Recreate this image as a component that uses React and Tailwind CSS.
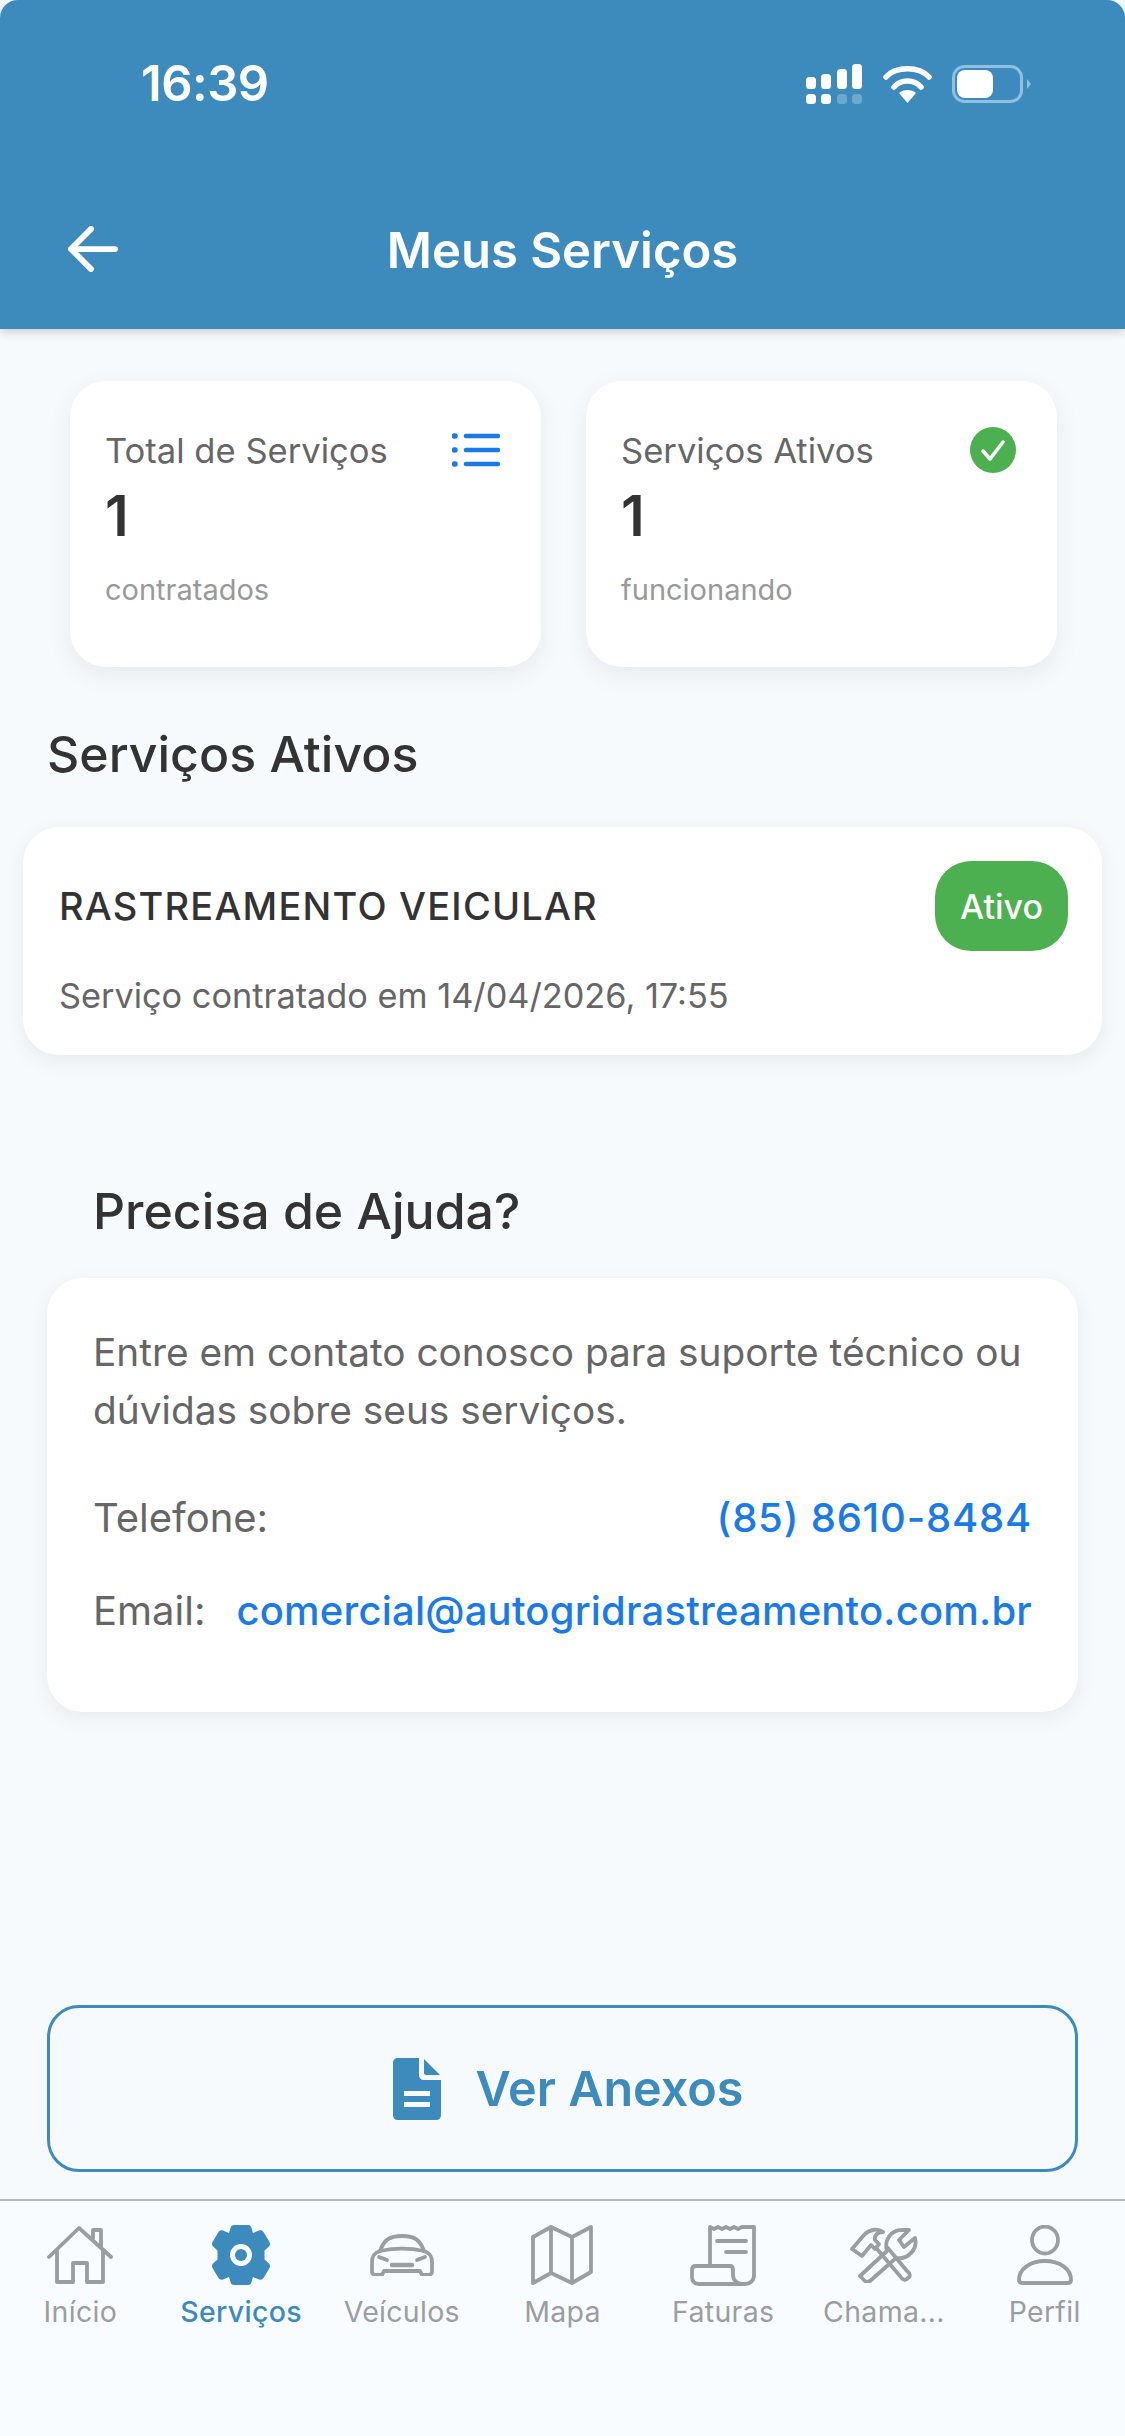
import React from 'react';

const BLUE = '#3d8bbd';

const StatusIcons = () => (
  <svg width="226" height="40" viewBox="0 0 226 40" fill="none">
    {/* signal */}
    <g fill="#fff">
      <rect x="0" y="13" width="10" height="12" rx="3.5" />
      <rect x="15" y="10" width="10" height="15" rx="3.5" />
      <rect x="31" y="5" width="10" height="20" rx="3.5" />
      <rect x="46" y="0" width="10" height="25" rx="3.5" />
      <rect x="0" y="30" width="10" height="10" rx="3.5" />
      <rect x="15" y="30" width="10" height="10" rx="3.5" />
    </g>
    <g fill="#fff" opacity="0.25">
      <rect x="31" y="30" width="10" height="10" rx="3.5" />
      <rect x="46" y="30" width="10" height="10" rx="3.5" />
    </g>
    {/* wifi */}
    <g stroke="#fff" strokeWidth="5.5" strokeLinecap="round" fill="none">
      <path d="M80 13 C 90 2, 113 2, 123 13" />
      <path d="M88 23 C 95 15, 108 15, 115 23" />
    </g>
    <path d="M101.500 39 L93 29 C 97 25, 106 25, 110 29 Z" fill="#fff" />
    {/* battery */}
    <rect x="147.500" y="2.500" width="68" height="35" rx="11" stroke="#8fc0e0" strokeWidth="3" />
    <rect x="151" y="6" width="36" height="28" rx="8" fill="#fff" />
    <path d="M221 15 L225 20 L221 25 Z" fill="#8fc0e0" />
  </svg>
);

const HomeIcon = () => (
  <svg width="66" height="60" viewBox="0 0 66 60" fill="none" stroke="#9a9ea1" strokeWidth="3.8" strokeLinecap="round" strokeLinejoin="round">
    <path d="M2 32 L32 3 L64 32" />
    <path d="M10 26 V57 H26 V38 H40 V57 H56 V26" />
    <path d="M46 13 V5 H54 V22" />
  </svg>
);

const GearIcon = () => (
  <svg width="60" height="62" viewBox="0 0 60 62">
    <path
      fill={BLUE}
      fillRule="evenodd"
      d="M23 1 H37 C39 1 40 2 40.5 4 L42 9 L48 6.5 C50 6 51.5 6.5 52.5 8 L58.5 18 C59.5 20 59 21.5 57.5 23 L53.5 26.5 V35.5 L57.5 39 C59 40.5 59.5 42 58.5 44 L52.5 54 C51.5 55.5 50 56 48 55.5 L42 53 L40.5 58 C40 60 39 61 37 61 H23 C21 61 20 60 19.5 58 L18 53 L12 55.5 C10 56 8.5 55.5 7.5 54 L1.5 44 C0.5 42 1 40.5 2.5 39 L6.5 35.5 V26.5 L2.5 23 C1 21.5 0.5 20 1.5 18 L7.5 8 C8.5 6.5 10 6 12 6.5 L18 9 L19.5 4 C20 2 21 1 23 1 Z M30 20 A11 11 0 1 0 30 42 A11 11 0 1 0 30 20 Z"
    />
    <circle cx="30" cy="31" r="6" fill={BLUE} />
  </svg>
);

const CarIcon = () => (
  <svg width="64" height="42" viewBox="0 0 64 42" fill="none" stroke="#9a9ea1" strokeWidth="3.8" strokeLinecap="round" strokeLinejoin="round">
    <path d="M10 17 C14 6 19 2 32 2 C45 2 50 6 54 17" />
    <path d="M10 17 C4 19 2 22 2 28 V38 C2 40 4 41 6 41 H12 L14 37 H50 L52 41 H58 C60 41 62 40 62 38 V28 C62 22 60 19 54 17 C40 14 24 14 10 17 Z" />
    <path d="M9 23 L17 26 M55 23 L47 26" />
    <path d="M22 31 H42" strokeWidth="4.5" />
  </svg>
);

const MapIcon = () => (
  <svg width="62" height="60" viewBox="0 0 62 60" fill="none" stroke="#9a9ea1" strokeWidth="3.8" strokeLinecap="round" strokeLinejoin="round">
    <path d="M2 12 L20 2 L41 12 L60 2 V47 L41 58 L20 48 L2 58 Z" />
    <path d="M20 2 V48 M41 12 V58" />
  </svg>
);

const ReceiptIcon = () => (
  <svg width="66" height="61" viewBox="0 0 66 61" fill="none" stroke="#9a9ea1" strokeWidth="3.8" strokeLinecap="round" strokeLinejoin="round">
    <path d="M20 40 V2 L24 4 L28 2 L32 4 L36 2 L40 4 L44 2 L48 4 L52 2 L64 2 V50 C64 56 60 59 54 59 H9 C4 59 2 56 2 52 V45 C2 42 4 41 6 41 H40 C42 41 43 42 43 45 V50 C43 56 48 59 54 59" />
    <path d="M27 16 H56 M36 27 H56" strokeWidth="3.8" />
  </svg>
);

const ToolsIcon = () => (
  <svg width="68" height="56" viewBox="0 0 68 56" fill="none" stroke="#9a9ea1" strokeWidth="3.8" strokeLinecap="round" strokeLinejoin="round">
    <path d="M2 22 L14 8 C20 2 28 1 33 5 C27 5 24 9 25 13 L29 17 L25 22 L21 18 L12 29 Z" />
    <path d="M27 22 L50 49 C52 53 56 54 58 51 C61 49 60 46 57 44 L37 20" />
    <path d="M16 55 L10 49 L37 24 C34 14 40 3 52 3 L59 3 L49 13 L54 20 L65 11 C68 22 58 33 46 31 L20 54 C18 55 17 55 16 55 Z" />
  </svg>
);

const PersonIcon = () => (
  <svg width="56" height="60" viewBox="0 0 56 60" fill="none" stroke="#9a9ea1" strokeWidth="3.8" strokeLinecap="round" strokeLinejoin="round">
    <ellipse cx="28" cy="15" rx="13" ry="13.5" />
    <path d="M2 55 C2 44 13 36 28 36 C43 36 54 44 54 55 C54 57 53 58 51 58 H5 C3 58 2 57 2 55 Z" />
  </svg>
);

const tabs = [
  { label: 'Início', icon: <HomeIcon /> },
  { label: 'Serviços', icon: <GearIcon />, active: true },
  { label: 'Veículos', icon: <CarIcon /> },
  { label: 'Mapa', icon: <MapIcon /> },
  { label: 'Faturas', icon: <ReceiptIcon /> },
  { label: 'Chama...', icon: <ToolsIcon /> },
  { label: 'Perfil', icon: <PersonIcon /> },
];

const StatCard = ({ title, value, note, icon }) => (
  <div className="w-[471px] h-[286px] rounded-[36px] bg-white pl-[35px] pr-[41px] pt-[45px] shadow-[0_8px_24px_rgba(40,60,80,0.08)]">
    <div className="flex items-center justify-between h-[48px]">
      <span className="text-[34.6px] leading-[48px] text-[#666666]">{title}</span>
      {icon}
    </div>
    <div className="mt-[8px] text-[56px] leading-[68px] font-semibold text-[#333333]">{value}</div>
    <div className="mt-[22px] text-[29px] leading-[36px] text-[#999999]">{note}</div>
  </div>
);

export default function App() {
  return (
    <div
      className="w-[1125px] h-[2436px] flex flex-col bg-[#f7fafc] overflow-hidden"
      style={{ fontFamily: 'Inter, "Noto Sans", sans-serif' }}
    >
      <header className="h-[329px] shrink-0 bg-[#3d8bbd] rounded-t-[18px] shadow-[0_3px_10px_rgba(0,0,0,0.18)] text-white relative z-10">
        <div className="flex items-center justify-between pl-[141px] pr-[93px] pt-[56px] h-[112px]">
          <span className="text-[49px] leading-[56px] font-semibold tracking-[-0.5px]">16:39</span>
          <StatusIcons />
        </div>
        <div className="flex items-center pl-[68px] mt-[85px] h-[104px] relative">
          <svg width="50" height="46" viewBox="0 0 52 48" fill="none" stroke="#fff" strokeWidth="6" strokeLinecap="round" strokeLinejoin="round">
            <path d="M24 3 L3 24 L24 45 M3 24 H49" />
          </svg>
          <h1 className="absolute inset-x-0 top-[24px] text-center text-[49px] leading-[60px] font-semibold">Meus Serviços</h1>
        </div>
      </header>

      <main className="flex-1 flex flex-col">
        <div className="flex gap-[45px] pl-[70px] pt-[52px]">
          <StatCard
            title="Total de Serviços"
            value="1"
            note="contratados"
            icon={
              <svg width="48" height="36" viewBox="0 0 48 36" fill="none" stroke="#1a7ae8" strokeWidth="4.5" strokeLinecap="round">
                <path d="M14 4 H46 M14 18 H46 M14 32 H46" />
                <path d="M2.5 4 H3 M2.5 18 H3 M2.5 32 H3" strokeWidth="5.5" />
              </svg>
            }
          />
          <StatCard
            title="Serviços Ativos"
            value="1"
            note="funcionando"
            icon={
              <svg width="46" height="46" viewBox="0 0 46 46" fill="none">
                <circle cx="23" cy="23" r="23" fill="#4caf50" />
                <path d="M13 24 L20 32 L33 15" stroke="#fff" strokeWidth="3.5" strokeLinecap="round" strokeLinejoin="round" />
              </svg>
            }
          />
        </div>

        <h2 className="pl-[47px] mt-[56px] text-[50px] leading-[62px] font-medium text-[#333333]">Serviços Ativos</h2>

        <section className="mx-[23px] mt-[42px] h-[228px] rounded-[36px] bg-white pl-[36px] pr-[34px] pt-[34px] shadow-[0_6px_20px_rgba(40,60,80,0.08)]">
          <div className="flex items-center justify-between">
            <span className="text-[38px] leading-[46px] tracking-[1.2px] font-medium text-[#333333]">RASTREAMENTO VEICULAR</span>
            <span className="flex items-center justify-center w-[133px] h-[90px] rounded-[36px] bg-[#4caf50] text-white text-[34px] font-medium">
              Ativo
            </span>
          </div>
          <p className="mt-[23px] text-[34.3px] leading-[44px] text-[#666666]">Serviço contratado em 14/04/2026, 17:55</p>
        </section>

        <h2 className="pl-[93px] mt-[126px] text-[50px] leading-[60px] font-medium text-[#333333]">Precisa de Ajuda?</h2>

        <section className="mx-[47px] mt-[37px] h-[434px] rounded-[36px] bg-white px-[46px] pt-[45px] shadow-[0_6px_20px_rgba(40,60,80,0.08)]">
          <p className="text-[38.8px] leading-[58px] text-[#666666]">
            Entre em contato conosco para suporte técnico ou dúvidas sobre seus serviços.
          </p>
          <div className="mt-[56px] flex items-center justify-between text-[40px] leading-[46px]">
            <span className="text-[#666666]">Telefone:</span>
            <span className="font-medium tracking-[0.8px] text-[#1a7ae8]">(85) 8610-8484</span>
          </div>
          <div className="mt-[47px] flex items-center justify-between text-[40px] leading-[46px]">
            <span className="text-[#666666]">Email:</span>
            <span className="font-medium tracking-[0.2px] text-[#1a7ae8]">comercial@autogridrastreamento.com.br</span>
          </div>
        </section>

        <div className="flex-1" />

        <button className="mx-[47px] h-[167px] rounded-[32px] border-[3px] border-[#3d8bbd] flex items-center justify-center gap-[34px] pl-[12px] text-[#3d8bbd] mb-[27px]">
          <svg width="48" height="62" viewBox="0 0 48 62">
            <path
              fill="#3d8bbd"
              fillRule="evenodd"
              d="M5 0 H26 V17 C26 20 28 22 31 22 H48 V57 C48 60 46 62 43 62 H5 C2 62 0 60 0 57 V5 C0 2 2 0 5 0 Z M11 33 V38 H37 V33 Z M11 44 V49 H37 V44 Z"
            />
            <path fill="#3d8bbd" d="M31 1 L47 17 H33 C32 17 31 16 31 15 Z" />
          </svg>
          <span className="text-[48.5px] leading-[60px] font-semibold">Ver Anexos</span>
        </button>
      </main>

      <nav className="h-[237px] shrink-0 border-t-2 border-[#b3b8bb] bg-[#f9fcfe] grid grid-cols-7 pt-[22px]">
        {tabs.map(tab => (
          <div key={tab.label} className="flex flex-col items-center">
            <div className="h-[64px] flex items-center justify-center">{tab.icon}</div>
            <span className={`mt-[8px] text-[28.5px] leading-[34px] tracking-[0.3px] ${tab.active ? 'text-[#3d8bbd] font-medium' : 'text-[#9a9ea1]'}`}>
              {tab.label}
            </span>
          </div>
        ))}
      </nav>
    </div>
  );
}
